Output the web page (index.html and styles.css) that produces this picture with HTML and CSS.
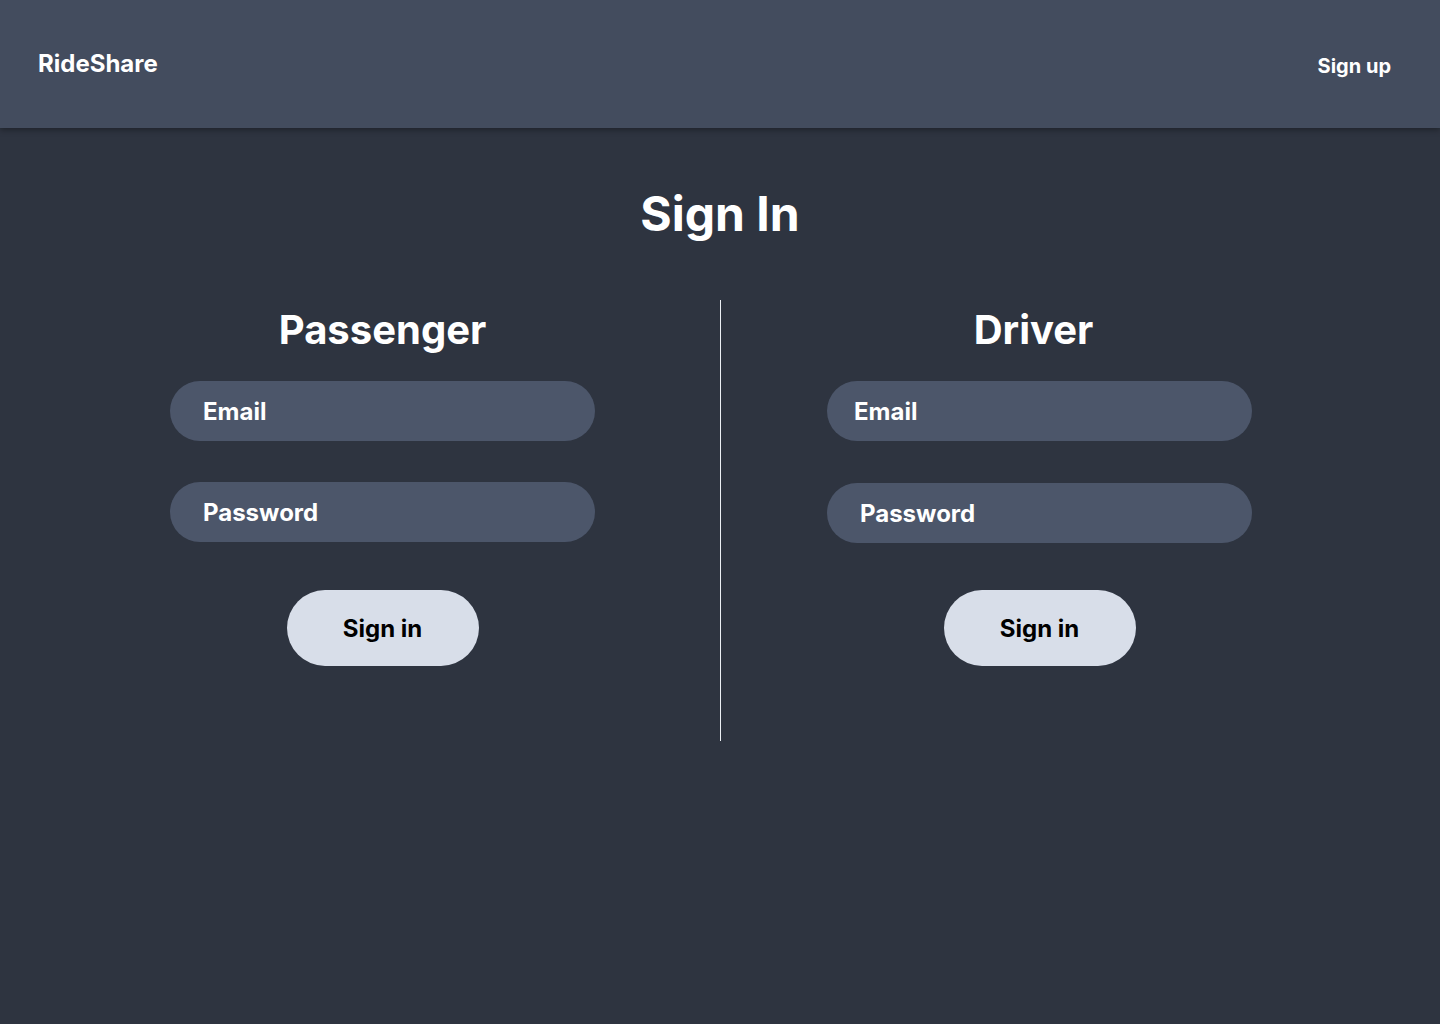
FILE: index.html
```html
<!DOCTYPE html>
<html lang="en">
<head>
<meta charset="utf-8">
<title>RideShare - Sign In</title>
<link rel="stylesheet" href="styles.css">
</head>
<body>
<header class="topbar">
  <a class="brand" href="#">RideShare</a>
  <a class="nav-link" href="#">Sign up</a>
</header>
<main class="page">
  <h1 class="page-title">Sign In</h1>
  <div class="columns">
    <section class="col col-left">
      <h2 class="col-title">Passenger</h2>
      <form class="form">
        <input class="field" type="email" placeholder="Email">
        <input class="field" type="password" placeholder="Password">
        <button class="btn" type="button">Sign in</button>
      </form>
    </section>
    <div class="divider"></div>
    <section class="col col-right">
      <h2 class="col-title col-title-driver">Driver</h2>
      <form class="form">
        <input class="field field-email2" type="email" placeholder="Email">
        <input class="field field-pw2" type="password" placeholder="Password">
        <button class="btn btn-2" type="button">Sign in</button>
      </form>
    </section>
  </div>
</main>
</body>
</html>
```

FILE: styles.css
```css
* { box-sizing: border-box; }
html, body { margin: 0; padding: 0; }
body {
  background: #2E3440;
  font-family: Inter, "Noto Sans", sans-serif;
  color: #ffffff;
  min-height: 1024px;
}
.topbar {
  height: 128px;
  background: #434C5E;
  display: flex;
  align-items: center;
  justify-content: space-between;
  padding: 0 49px 0 38px;
  box-shadow: 0 2px 6px rgba(0,0,0,0.35);
  position: relative;
}
.brand {
  color: #ffffff;
  text-decoration: none;
  font-size: 24px;
  font-weight: 700;
  margin-top: -2px;
}
.nav-link {
  color: #ffffff;
  text-decoration: none;
  font-size: 20px;
  font-weight: 700;
  margin-top: 4px;
}
.page {
  display: flex;
  flex-direction: column;
  align-items: stretch;
}
.page-title {
  margin: 57px 0 0;
  text-align: center;
  font-size: 48px;
  font-weight: 700;
  line-height: 58px;
}
.columns {
  display: flex;
  margin-top: 57px;
  padding-left: 45px;
}
.col {
  display: flex;
  flex-direction: column;
  align-items: center;
}
.col-left { width: 675px; }
.col-right { width: 637px; }
.divider {
  width: 1px;
  height: 441px;
  background: #ECEFF4;
}
.col-title {
  margin: 0;
  font-size: 40px;
  font-weight: 700;
  line-height: 48px;
  margin-top: 6px;
}
.col-title-driver { padding-right: 12px; }
.form {
  display: flex;
  flex-direction: column;
  align-items: center;
  margin-top: 27px;
}
.field {
  width: 425px;
  height: 60px;
  border: none;
  border-radius: 30px;
  background: #4C566A;
  padding: 0 33px;
  font-family: inherit;
  font-size: 24px;
  font-weight: 700;
  color: #ffffff;
  outline: none;
}
.field::placeholder { color: #ffffff; opacity: 1; }
.field + .field { margin-top: 41px; }
.field-email2 { padding-left: 27px; }
.field-pw2 { margin-top: 42px !important; }
.btn {
  margin-top: 48px;
  width: 192px;
  height: 76px;
  border: none;
  border-radius: 38px;
  background: #D8DEE9;
  color: #000000;
  font-family: inherit;
  font-size: 24px;
  font-weight: 700;
  cursor: pointer;
}
.btn-2 { margin-top: 47px; }
```
